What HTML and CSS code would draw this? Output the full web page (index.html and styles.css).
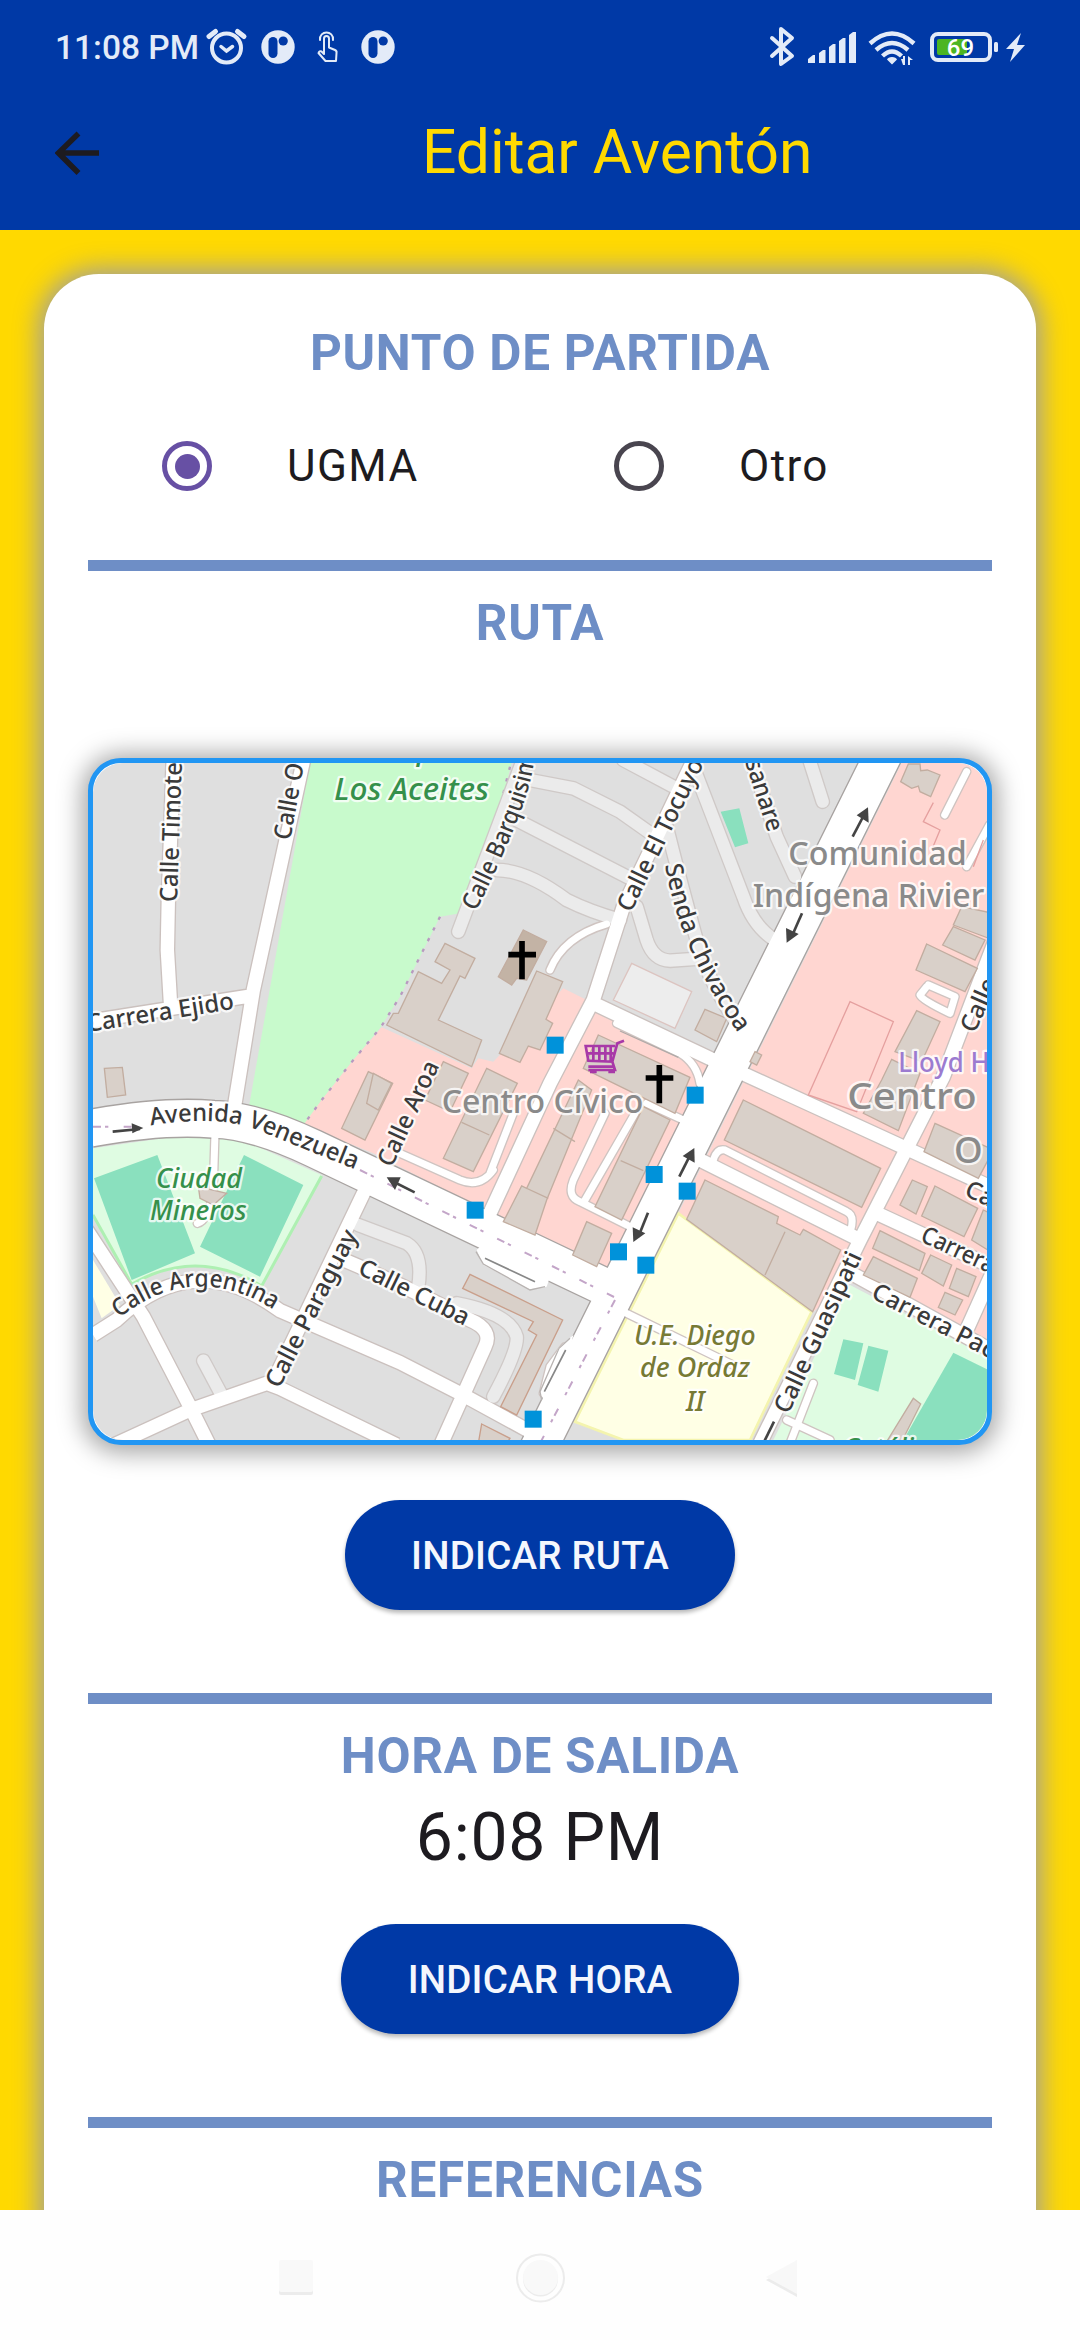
FILE: index.html
```html
<!DOCTYPE html>
<html lang="es">
<head>
<meta charset="utf-8">
<title>Editar Aventón</title>
<link rel="stylesheet" href="styles.css">
</head>
<body>
<header class="header">
  <div class="status">
    <span class="clock">11:08 PM</span>
    <svg class="status-left" viewBox="200 20 200 52" width="200" height="52">
      <g fill="none" stroke="#e3ebf8" stroke-linecap="round">
        <circle cx="226.500" cy="48" r="14.500" stroke-width="4"/>
        <path d="M209 36.500l6.500-5M244 36.500l-6.500-5" stroke-width="5"/>
        <path d="M221 46.500l5.500 4.500 6-4.500" stroke-width="3.500"/>
        <path d="M320 40c-1-10 14-10 13 0" stroke-width="2"/>
        <path d="M324.500 54V39c0-3.500 5-3.500 5 0v9l6 2.500q2 1 1.500 3l-1 7.500h-10l-8-8q1-2 3-1.500z" transform="translate(-10.500 0)" stroke="none"/>
        <path d="M324 54V38.500c0-3.500 5-3.500 5 0v9l6 2.500q2 1 1.500 3l-.5 8h-10.500l-7-8q1-2.500 3-1.500z" stroke-width="2" stroke-linejoin="round"/>
      </g>
      <g id="app">
        <circle cx="278" cy="47" r="16.700" fill="#e3ebf8"/>
        <rect x="268.500" y="37" width="9" height="21" rx="4.500" fill="#0039a6"/>
        <circle cx="283.200" cy="41" r="4.600" fill="#0039a6"/>
      </g>
      <use href="#app" x="100"/>
    </svg>
    <svg class="status-right" viewBox="766 20 264 52" width="264" height="52">
      <path d="M772 38l20 18-11 8V29l11 9-20 18" fill="none" stroke="#e3ebf8" stroke-width="4" stroke-linejoin="round" stroke-linecap="round"/>
      <g fill="#e3ebf8">
        <path d="M808 63v-4l5-4h2v8zM819 63V53l4-3h2.500v13zM829 63V47l4-3h2.500v19zM839 63V41l4-3h2.500v25zM849 63V35l4-3h3v31z"/>
        <path d="M892 57q4 0 5 2.500l-5 5-5-5q1-2.500 5-2.500zM901 59h2v-3h2v9h-2zM908 65V56l5 4h-3v5z"/>
      </g>
      <g fill="none" stroke="#e3ebf8" stroke-width="4.400">
        <path d="M870 43.500q22-20 44 0M876 50q16-14 32 0M882.500 56q9.500-9 19 0"/>
      </g>
      <rect x="932" y="34" width="58" height="26" rx="6" fill="none" stroke="#e3ebf8" stroke-width="4"/>
      <path d="M939 39h28v16h-28q-2 0-2-2V41q0-2 2-2z" fill="#4cb522"/>
      <rect x="994" y="42" width="4" height="10" rx="1.500" fill="#e3ebf8"/>
      <path d="M1021 33l-15 16h8l-4 13 15-17h-8z" fill="#e3ebf8"/>
      <text x="960.500" y="55.500" class="battery">69</text>
    </svg>
  </div>
  <div class="appbar">
    <svg class="back" viewBox="55 131 45 44" width="45" height="44"><path d="M99 153H59M78.500 133.500L58.500 153l20 20" fill="none" stroke="#1d1b20" stroke-width="5.500"/></svg>
    <h1 class="title">Editar Aventón</h1>
  </div>
</header>
<main class="content">
  <section class="card">
    <h2 class="heading first">PUNTO DE PARTIDA</h2>
    <div class="options">
      <label class="option"><span class="radio checked"></span><span>UGMA</span></label>
      <label class="option"><span class="radio"></span><span>Otro</span></label>
    </div>
    <div class="divider after-options"></div>
    <h2 class="heading">RUTA</h2>
    <div class="map">
      <svg viewBox="39 69 2682 2031" preserveAspectRatio="none" width="894" height="677">
        <defs>
          <g id="minor">
            <path d="M1350 120L1480 145 1620 215 1740 300M1310 240L1660 420M1250 390Q1340 390 1460 480 1530 515 1620 540M1630 60L1790 145M1340 30L1135 575M1670 500L1700 600Q1720 660 1770 662L1870 655M1760 260Q1800 420 1850 600 1880 720 1990 880M1840 80L1990 470Q2020 560 2085 600M2010 50L2090 290 2145 410M2185 50L2228 185"/>
            <path d="M835 1455L980 1510Q1030 1540 1015 1640M370 1862L425 1965M1130 1690Q1290 1720 1310 1790 1315 1830 1240 1970"/>
          </g>
          <g id="thin">
            <path d="M1410 690Q1450 590 1580 552M1610 850L1800 940Q1850 970 1860 1030M1900 1260Q1910 1225 1935 1230L2300 1415Q2325 1425 2312 1470M405 1180L400 1340Q390 1440 352 1450M1575 1120L1480 1320Q1460 1370 1500 1385L1650 1460M1665 1120L1515 1380M960 1240L1140 1320Q1200 1345 1240 1290M1230 1300L1300 1120M2660 95L2594 225M2728 255L2660 380M2540 740L2520 765Q2525 780 2610 820L2625 770 2545 735M1640 1720L1990 1890M2200 1930L2130 2110M2120 2040L2250 2100M1700 1090L1810 1140M1455 1820L1410 1880 1390 1960"/>
          </g>
          <g id="road">
            <path d="M280 50L265 480 262 630 272 800M39 842L510 768M39 1785L110 1740Q340 1520 600 1712L960 1868 1140 1960 1360 2080M20 1470L190 1730 330 2000 390 2120M80 2125L330 2010 560 1930 600 1945 950 2115M860 1340L575 1935M780 1555Q950 1625 1170 1740 1240 1770 1215 1820L1080 2120M675 40L520 750 460 1120"/>
            <path d="M2750 590L2590 1010 2340 1500 2040 2110M2380 1415L2740 1582M2300 1592L2740 1835M1850 1255L2330 1495M2660 1770L2750 1570"/>
            <path d="M1855 30L1630 500 1540 780 1410 1030 1225 1430M1540 790L1900 960 2740 1345"/>
          </g>
          <g id="avenue">
            <path d="M30 1165Q250 1125 400 1138 520 1140 700 1225L1640 1672M2412 40L1368 2140"/>
          </g>
          <path id="l1" d="M100 1748Q340 1545 600 1722"/>
          <path id="l2" d="M212 1157Q400 1125 520 1165L830 1290"/>
          <path id="l3" d="M1755 375Q1800 640 1990 900"/>
          <path id="l4" d="M1187 515Q1262 370 1320 220 1355 130 1366 40"/>
        </defs>
        <rect x="39" y="69" width="2682" height="2031" fill="#dfdfdf"/>
        <path d="M690 69H1295L1250 240 1200 370 1140 520 1080 530 960 770 900 865 820 960 725 1080 670 1160 505 1110z" fill="#c8facc"/>
        <path d="M905 862L1175 985 1195 955 1240 965 1450 745 1510 775 1900 960 1580 1600 880 1240 670 1155 725 1080 820 960z" fill="#ffd6d1"/>
        <path d="M2465 69H2721V1840L2310 1620 2195 1720 1795 1420z" fill="#ffd6d1"/>
        <path d="M1795 1420L2195 1715 2010 2100H1630L1485 2045z" fill="#ffffe5" stroke="#f4f4ae" stroke-width="8"/>
        <path d="M2310 1635L2721 1850V2100H2080z" fill="#dffce2"/>
        <path d="M2620 1838L2721 1888V2100H2470z" fill="#8ae0be"/>
        <path d="M2290 1798L2350 1810 2325 1920 2262 1902zM2365 1817L2425 1832 2395 1955 2333 1935zM1922 215L1978 205 2005 310 1965 322z" fill="#8ae0be"/>
        <path d="M39 1225L270 1192H400L500 1205 725 1305 545 1640Q350 1520 155 1635L39 1420z" fill="#dffce2"/>
        <path d="M725 1308L545 1638Q350 1520 155 1633L39 1425" fill="none" stroke="#aef0b2" stroke-width="9"/>
        <path d="M232 1245L345 1540 155 1620 42 1315zM492 1245L670 1335 540 1610 360 1520z" fill="#8ae0be"/>
        <path d="M39 1560L120 1695 65 1735 39 1670z" fill="#ffffe5"/>
        <path d="M1290 80L1250 240 1200 370M1080 530L960 770 900 865 820 960 725 1080 670 1155" fill="none" stroke="#b89ac0" stroke-width="7" stroke-dasharray="10 26"/>
        <path d="M1655 670L1835 755 1785 865 1600 780z" fill="#ededed" stroke="#dcc4c0" stroke-width="4"/>

        <use href="#minor" class="minor-case"/>
        <use href="#thin" class="thin-case"/>
        <use href="#road" class="road-case"/>
        <use href="#avenue" class="avenue-case"/>
        <use href="#minor" class="minor"/>
        <use href="#thin" class="thin"/>
        <use href="#road" class="road"/>
        <use href="#avenue" class="avenue"/>
        <path d="M1190 1530L1210 1575 1350 1648 1400 1640 1410 1610 1220 1500zM1480 1785L1435 1825 1382 1955 1392 1985 1440 1960z" fill="#fff"/>
        <path d="M1188 1535L1210 1572 1350 1650 1395 1640M1470 1795L1437 1825 1380 1955 1385 1980" fill="none" stroke="#b8b3b1" stroke-width="4"/>
        <path d="M1215 1555L1365 1625M1457 1830L1393 1955" fill="none" stroke="#888" stroke-width="5"/>
        <path d="M1620 873L1795 952" fill="none" stroke="#b0aaa8" stroke-width="4"/>
        <path d="M39 1160H170M840 1290L1610 1675M1605 1680L1380 2110" fill="none" stroke="#c3a5c8" stroke-width="6" stroke-dasharray="24 12 10 46"/>

        <g fill="#d9d0c9" stroke="#c2ada0" stroke-width="4">
          <path d="M73 985L127 982 137 1065 82 1072zM865 995L938 1030 855 1200 785 1165z"/>
          <path d="M1095 610L1185 655 1155 715 1140 708 1075 840 1205 900 1175 980 920 855 940 820 955 820 1015 695 1085 730 1110 690 1065 665z"/>
          <path d="M1330 570L1400 605 1340 720 1310 715 1295 735 1255 710z" fill="#c3b3a5"/>
          <path d="M1370 693L1448 725 1398 838 1418 850 1380 930 1345 918 1320 967 1258 940z"/>
          <path d="M1555 885L1830 1012 1785 1120 1510 985zM1090 965L1165 1000 1110 1115 1035 1080zM1220 985L1312 1030 1180 1295 1090 1255zM1145 1147L1228 1185M880 1000L935 1030 895 1110 860 1090z"/>
          <path d="M1495 1020L1535 1050 1400 1380 1365 1485 1270 1445 1325 1338 1340 1345zM1420 1165L1485 1205M1325 1338L1405 1375"/>
          <path d="M1690 1100L1770 1140 1625 1440 1545 1400zM1622 1262L1690 1292M1520 1445L1595 1480 1550 1580 1478 1545z"/>
          <path d="M1170 1603L1448 1740 1310 2025 1262 2000 1370 1785 1345 1770 1360 1745 1148 1645zM1205 2052L1290 2095 1280 2110H1195z" stroke="#c99f8b"/>
          <path d="M1990 1080L2402 1285 2345 1402 1933 1200zM1875 1320L2095 1430 2090 1450 2160 1485 2170 1468 2282 1530 2198 1715 1820 1438zM2115 1475L2055 1605"/>
          <path d="M2400 1472L2535 1540 2518 1592 2378 1525zM2380 1550L2512 1615 2490 1672 2350 1605zM2552 1545L2615 1575 2590 1638 2525 1600zM2630 1585L2688 1610 2665 1670 2608 1645zM2595 1657L2648 1680 2625 1725 2575 1702z"/>
          <path d="M2497 1320L2542 1340 2508 1422 2460 1395zM2565 1338L2693 1405 2652 1490 2525 1428zM2565 1150L2740 1230 2695 1315 2532 1235zM2710 1410L2740 1425V1540L2675 1500z"/>
          <path d="M2435 958L2520 1000 2455 1172 2350 1120 2405 1020zM2510 812L2580 845 2525 965 2445 935zM2540 612L2692 685 2655 755 2508 690zM2620 560L2715 600 2685 660 2588 615zM2645 500L2740 520V600L2620 555z"/>
          <path d="M2485 72H2520L2522 92 2542 90 2580 105 2552 170 2520 155 2515 138 2495 145 2462 125zM1875 808L1940 835 1910 905 1845 870zM2500 1975L2522 1992 2465 2105H2420zM2025 935L2045 945 2030 975 2010 965zM355 1340L440 1360 400 1395 360 1375z" transform="translate(0 0)"/>
        </g>
        <path d="M2185 1065L2310 785 2440 845 2330 1115zM2560 188L2530 245 2580 270 2555 330M2710 300L2680 380" fill="none" stroke="#e5a09f" stroke-width="4"/>

        <g fill="#444" stroke="#444" stroke-width="8">
          <path d="M98 1175L180 1167" fill="none"/><path d="M190 1164L155 1150 157 1180z" stroke="none"/>
          <path d="M1004 1357L930 1320" fill="none"/><path d="M920 1312L962 1312 945 1350z" stroke="none"/>
          <path d="M2318 290L2352 225" fill="none"/><path d="M2364 202L2330 226 2366 248z" stroke="none"/>
          <path d="M2166 520L2135 590" fill="none"/><path d="M2120 608L2118 564 2156 582z" stroke="none"/>
          <path d="M1798 1310L1833 1240" fill="none"/><path d="M1843 1224L1808 1248 1844 1268z" stroke="none"/>
          <path d="M1704 1418L1675 1490" fill="none"/><path d="M1660 1506L1658 1462 1696 1480z" stroke="none"/>
          <path d="M2082 2045L2050 2110" fill="none"/>
        </g>
        <g fill="#0092da">
          <rect x="1400" y="890" width="51" height="51"/><rect x="1820" y="1040" width="51" height="51"/><rect x="1697" y="1278" width="51" height="51"/><rect x="1796" y="1328" width="51" height="51"/><rect x="1160" y="1385" width="51" height="51"/><rect x="1590" y="1510" width="51" height="51"/><rect x="1672" y="1550" width="51" height="51"/><rect x="1334" y="2012" width="51" height="51"/>
        </g>
        <path d="M1285 644H1368M1326 603V718M1697 1014H1780M1738 975V1090" stroke="#000" stroke-width="17"/>
        <path d="M1632 902L1612 910 1597 965 1525 962 1517 918H1605M1521 940H1600M1540 920V962M1558 920V962M1576 920V962M1592 920V962M1597 965L1605 990H1525M1525 980H1600M1530 996H1550M1585 996H1605" fill="none" stroke="#a839a8" stroke-width="8"/>

        <g class="street">
          <text transform="translate(291 487) rotate(-88)" textLength="420" lengthAdjust="spacingAndGlyphs">Calle Timote</text>
          <text transform="translate(631 302) rotate(-80)" textLength="232" lengthAdjust="spacingAndGlyphs">Calle O</text>
          <text transform="translate(24 876) rotate(-9)" textLength="446" lengthAdjust="spacingAndGlyphs">Carrera Ejido</text>
          <text transform="translate(1653 520) rotate(-64)" textLength="500" lengthAdjust="spacingAndGlyphs">Calle El Tocuyo</text>
          <text transform="translate(1995 65) rotate(72)" textLength="225" lengthAdjust="spacingAndGlyphs">sanare</text>
          <text transform="translate(935 1285) rotate(-65)" textLength="340" lengthAdjust="spacingAndGlyphs">Calle Aroa</text>
          <text transform="translate(598 1948) rotate(-63)" textLength="520" lengthAdjust="spacingAndGlyphs">Calle Paraguay</text>
          <text transform="translate(830 1600) rotate(26)" textLength="360" lengthAdjust="spacingAndGlyphs">Calle Cuba</text>
          <text transform="translate(2125 2025) rotate(-65)" textLength="525" lengthAdjust="spacingAndGlyphs">Calle Guasipati</text>
          <text transform="translate(2370 1672) rotate(27)" textLength="405" lengthAdjust="spacingAndGlyphs">Carrera Pac</text>
          <text transform="translate(2518 1502) rotate(25)" textLength="235" lengthAdjust="spacingAndGlyphs">Carrera</text>
          <text transform="translate(2650 1365) rotate(25)">Car</text>
          <text transform="translate(2684 882) rotate(-66)">Calle</text>
          <text><textPath href="#l1" startOffset="22" textLength="500" lengthAdjust="spacingAndGlyphs">Calle Argentina</textPath></text>
          <text><textPath href="#l2" textLength="640" lengthAdjust="spacingAndGlyphs">Avenida Venezuela</textPath></text>
          <text><textPath href="#l3" textLength="555" lengthAdjust="spacingAndGlyphs">Senda Chivacoa</textPath></text>
          <text><textPath href="#l4" textLength="500" lengthAdjust="spacingAndGlyphs">Calle Barquisim</textPath></text>
        </g>
        <g class="place">
          <text x="1085" y="1118" textLength="605" lengthAdjust="spacingAndGlyphs">Centro Cívico</text>
          <text x="2125" y="375" textLength="535" lengthAdjust="spacingAndGlyphs">Comunidad</text>
          <text x="2018" y="502" textLength="695" lengthAdjust="spacingAndGlyphs">Indígena Rivier</text>
          <text x="2302" y="1108" textLength="388" lengthAdjust="spacingAndGlyphs" class="large">Centro</text>
          <text x="2622" y="1268" class="large">O</text>
        </g>
        <text x="2455" y="997" class="shop" textLength="274" lengthAdjust="spacingAndGlyphs">Lloyd H</text>
        <g class="area park">
          <text x="762" y="180" font-size="92" textLength="465" lengthAdjust="spacingAndGlyphs">Los Aceites</text>
          <text x="228" y="1343" font-size="80" textLength="258" lengthAdjust="spacingAndGlyphs">Ciudad</text>
          <text x="210" y="1441" font-size="80" textLength="290" lengthAdjust="spacingAndGlyphs">Mineros</text>
          <text x="1010" y="60" font-size="92">p</text>
          <text x="2290" y="2154" font-size="80">Católic</text>
        </g>
        <g class="area school">
          <text x="1662" y="1815" textLength="365" lengthAdjust="spacingAndGlyphs">U.E. Diego</text>
          <text x="1680" y="1912" textLength="330" lengthAdjust="spacingAndGlyphs">de Ordaz</text>
          <text x="1818" y="2012" textLength="56" lengthAdjust="spacingAndGlyphs">II</text>
        </g>
      </svg>
    </div>
    <button class="button ruta">INDICAR RUTA</button>
    <div class="divider"></div>
    <h2 class="heading">HORA DE SALIDA</h2>
    <p class="time">6:08 PM</p>
    <button class="button hora">INDICAR HORA</button>
    <div class="divider"></div>
    <h2 class="heading">REFERENCIAS</h2>
  </section>
</main>
<nav class="navbar">
  <svg viewBox="0 0 1080 130" width="1080" height="130">
    <g fill="#ececec">
      <rect x="279" y="53" width="34" height="32" rx="2"/>
      <path d="M797 53v34l-31-17z"/>
    </g>
    <rect x="279" y="50" width="34" height="32" rx="2" fill="#f9f9f9"/>
    <path d="M797 50v34l-31-17z" fill="#f8f8f8"/>
    <circle cx="540.500" cy="68" r="23.500" fill="none" stroke="#ececec" stroke-width="2"/>
    <circle cx="540.500" cy="69" r="17.500" fill="#ececec"/>
    <circle cx="540.500" cy="67.500" r="17.500" fill="#f9f9f9"/>
  </svg>
</nav>
</body>
</html>
```
FILE: styles.css
```css
* { box-sizing: border-box; margin: 0; padding: 0; }

body {
  width: 1080px;
  height: 2340px;
  display: flex;
  flex-direction: column;
  overflow: hidden;
  font-family: Roboto, "Liberation Sans", sans-serif;
  color: #1d1b20;
  background: #fefefe;
}

.header { height: 230px; flex: none; background: #0039a6; }
.status { height: 92px; display: flex; padding: 20px 50px 0 55px; }
.clock {
  width: 145px;
  color: #e3ebf8;
  font-size: 33.5px;
  font-weight: 500;
  line-height: 56px;
  white-space: nowrap;
}
.status-right { margin-left: auto; }
.battery {
  font: 500 24px Roboto, sans-serif;
  fill: #fff;
  text-anchor: middle;
}

.appbar { display: flex; align-items: center; height: 122px; padding-left: 55px; }
.title {
  margin-left: 322px;
  color: #ffd900;
  font-size: 60.5px;
  font-weight: 400;
  line-height: 80px;
  white-space: nowrap;
}

.content { height: 1980px; flex: none; padding: 44px 44px 0; background: #ffd900; overflow: hidden; }
.card {
  display: flex;
  flex-direction: column;
  align-items: center;
  height: 2100px;
  padding: 0 44px;
  border-radius: 55px;
  background: #fff;
  box-shadow: 0 0 26px 5px #9e9e9e;
}
.heading {
  margin-top: 22px;
  color: #6e8ec6;
  font-size: 49.5px;
  font-weight: 700;
  line-height: 60px;
  letter-spacing: 0.7px;
}
.heading.first { margin-top: 49px; }

.options { display: flex; width: 904px; height: 88px; margin-top: 39px; }
.option {
  display: flex;
  align-items: center;
  width: 452px;
  padding-left: 74px;
  gap: 75px;
  font-size: 44px;
  letter-spacing: 1.4px;
}
.radio {
  display: flex;
  align-items: center;
  justify-content: center;
  width: 50px;
  height: 50px;
  border: 5.5px solid #49454f;
  border-radius: 50%;
}
.radio.checked { border-color: #6750a4; }
.radio.checked::before {
  content: "";
  width: 25px;
  height: 25px;
  border-radius: 50%;
  background: #6750a4;
}

.divider { width: 904px; height: 11px; flex: none; margin-top: 83px; background: #6e8ec6; }
.divider.after-options { margin-top: 50px; }

.map {
  width: 904px;
  height: 687px;
  flex: none;
  margin-top: 105px;
  border: 5px solid #2196f3;
  border-radius: 33px;
  background: #fff;
  overflow: hidden;
  box-shadow: 0 2px 24px 6px #a6a6a6;
}
.map svg { display: block; border-radius: 30px; }
.map use { fill: none; stroke-linejoin: round; }
.minor-case { stroke: #cfc9c7; stroke-width: 45px; stroke-linecap: round; }
.minor { stroke: #ebebeb; stroke-width: 37px; stroke-linecap: round; }
.thin-case { stroke: #cfc4c1; stroke-width: 29px; stroke-linecap: round; }
.thin { stroke: #fff; stroke-width: 21px; stroke-linecap: round; }
.road-case { stroke: #cbc1be; stroke-width: 48px; }
.road { stroke: #fff; stroke-width: 40px; }
.avenue-case { stroke: #a8a3a1; stroke-width: 118px; }
.avenue { stroke: #fff; stroke-width: 110px; }

.map text {
  font-family: "Noto Sans", sans-serif;
  font-weight: 500;
  paint-order: stroke;
  stroke: #fff;
  stroke-opacity: 0.8;
  stroke-width: 14px;
  stroke-linejoin: round;
}
.street { font-size: 73px; fill: #3a3a3a; }
.place { font-size: 96px; fill: #8a8a8a; }
.place .large { font-size: 110px; }
.shop { font-size: 80px; fill: #9c7bd0; }
.area { font-style: italic; }
.park { fill: #35904b; }
.school { font-size: 80px; fill: #777a35; }

.button {
  height: 110px;
  flex: none;
  border: 0;
  border-radius: 55px;
  background: #0039a6;
  color: #f4f7fd;
  font-family: Roboto, sans-serif;
  font-size: 38.5px;
  font-weight: 500;
  letter-spacing: 0.2px;
  box-shadow: 0 3px 4px rgba(0, 0, 0, 0.28);
}
.button.ruta { width: 390px; margin-top: 55px; }
.button.hora { width: 398px; margin-top: 46px; }
.time { margin-top: 12px; font-size: 66px; line-height: 80px; letter-spacing: 0.8px; }

.navbar { height: 130px; flex: none; background: #fefefe; }
.navbar svg { display: block; }
```
